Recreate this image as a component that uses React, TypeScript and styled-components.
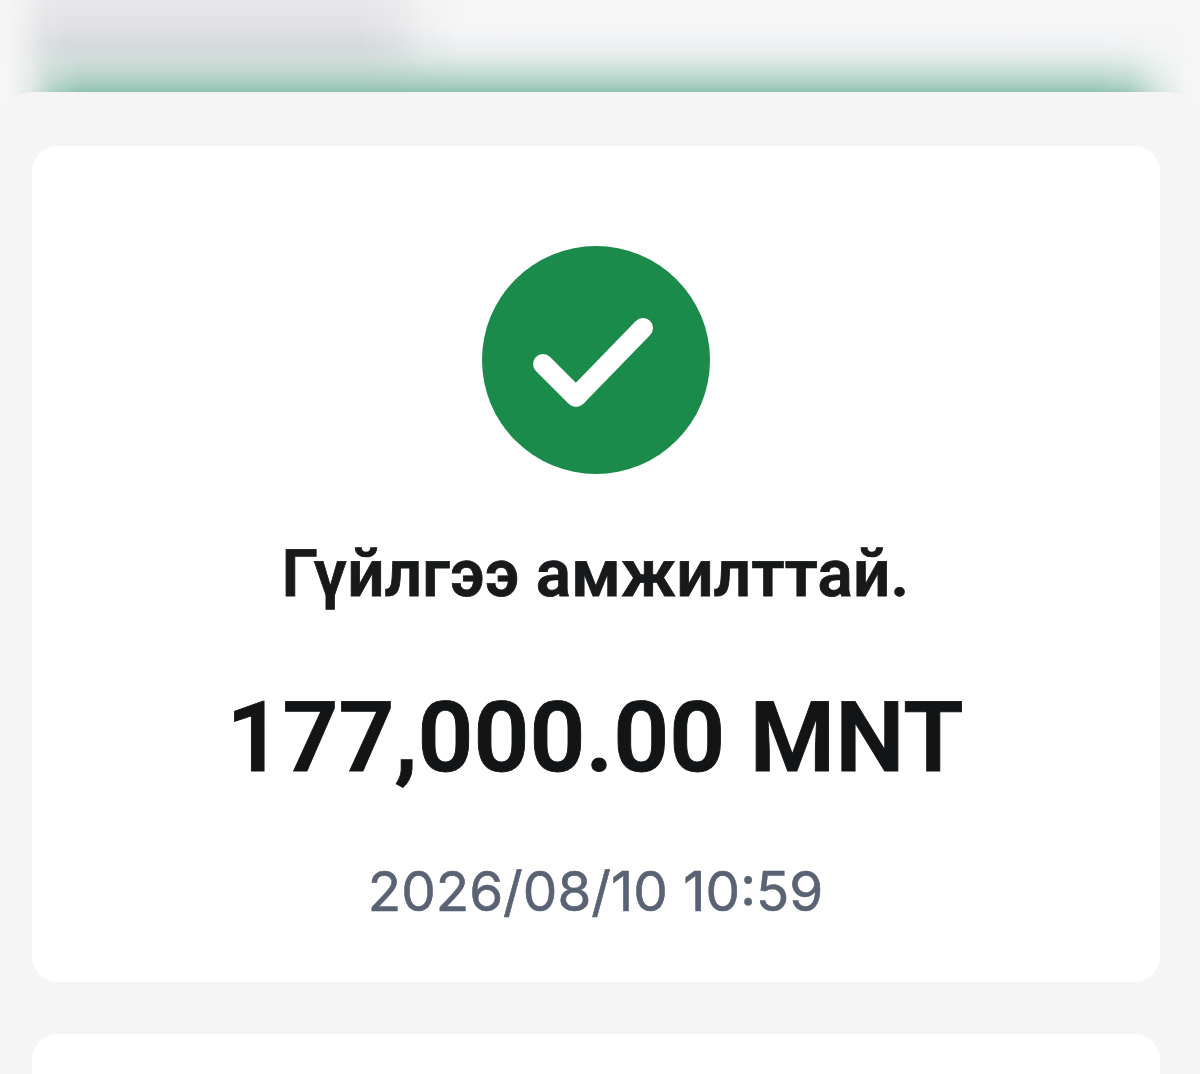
import React from "react";
import styled, { createGlobalStyle } from "styled-components";

const GlobalStyle = createGlobalStyle`
  * { box-sizing: border-box; }
  body { margin: 0; background: #f5f6f6; }
`;

const Screen = styled.main`
  position: relative;
  display: flex;
  flex-direction: column;
  height: 1074px;
  padding-top: 92px;
  overflow: hidden;
  background: #f6f6f7;
  font-family: Roboto, "Noto Sans", sans-serif;
`;

const Backdrop = styled.div`
  position: absolute;
  inset: 0 0 auto;
  height: 120px;
  overflow: hidden;
`;

const Haze = styled.div<{ $fill: string; $fade: string }>`
  position: absolute;
  inset: 0;
  background: linear-gradient(to bottom, ${(p) => p.$fill});
  mask-image: linear-gradient(to right, ${(p) => p.$fade});
`;

const Sheet = styled.section`
  position: relative;
  flex: 1;
  display: flex;
  flex-direction: column;
  gap: 52px;
  padding: 54px 40px 0 32px;
  border-radius: 34px 34px 0 0;
  background: #f5f5f5;
`;

const Card = styled.article<{ $height: number }>`
  display: flex;
  flex: none;
  flex-direction: column;
  align-items: center;
  height: ${(p) => p.$height}px;
  padding-top: 99px;
  border-radius: 26px;
  background: #fff;
`;

const StatusIcon = styled.svg`
  display: block;
  width: 230px;
  height: 230px;
`;

const Title = styled.h1`
  margin: 61px 1px 0 0;
  color: #17191b;
  font-size: 65.6px;
  font-weight: 600;
  line-height: 78px;
  letter-spacing: 0.25px;
  -webkit-text-stroke: 0.8px #17191b;
  text-rendering: geometricPrecision;
  white-space: nowrap;
`;

const Amount = styled.p`
  margin: 66px 2px 0 0;
  color: #121415;
  font-size: 98px;
  font-weight: 600;
  line-height: 116px;
  -webkit-text-stroke: 0.9px #121415;
  text-rendering: geometricPrecision;
  white-space: nowrap;
`;

const Timestamp = styled.time`
  margin: 62px 1px 0 0;
  color: #596374;
  font-family: Inter, sans-serif;
  font-size: 54.8px;
  font-weight: 400;
  line-height: 67px;
  -webkit-text-stroke: 0.6px #596374;
  white-space: nowrap;
`;

const greyFill = "#e8e8eb 0px, #e2e2e5 22px, #dcdee0 46px, rgba(221, 224, 225, 0.6) 64px, rgba(221, 224, 225, 0.1) 90px";
const greyFade = "transparent 6px, rgb(0 0 0 / 0.3) 24px, rgb(0 0 0 / 0.85) 44px, #000 64px, #000 360px, rgb(0 0 0 / 0.75) 395px, rgb(0 0 0 / 0.25) 425px, transparent 460px";
const greenFill =
  "rgb(64 152 122 / 0) 26px, rgb(64 120 122 / 0.03) 40px, rgb(64 140 122 / 0.06) 50px, rgb(64 152 122 / 0.14) 61px, rgb(64 152 122 / 0.27) 73px, rgb(64 152 122 / 0.4) 83px, rgb(64 152 122 / 0.54) 91px";
const greenFade =
  "transparent 10px, rgb(0 0 0 / 0.2) 30px, rgb(0 0 0 / 0.7) 52px, #000 82px, #000 1095px, rgb(0 0 0 / 0.85) 1128px, rgb(0 0 0 / 0.3) 1160px, transparent 1186px";

export default function App() {
  return (
    <>
      <GlobalStyle />
      <Screen>
        <Backdrop aria-hidden="true">
          <Haze $fill={greyFill} $fade={greyFade} />
          <Haze $fill={greenFill} $fade={greenFade} />
        </Backdrop>
        <Sheet>
          <Card $height={836}>
            <StatusIcon viewBox="0 0 230 230" role="img">
              <circle cx="115" cy="115" r="114" fill="#1b8b4b" />
              <path
                d="M62 119L95 152L162 83"
                fill="none"
                stroke="#fff"
                strokeWidth="20"
                strokeLinecap="round"
                strokeLinejoin="round"
              />
            </StatusIcon>
            <Title>Гүйлгээ амжилттай.</Title>
            <Amount>177,000.00 MNT</Amount>
            <Timestamp>2026/08/10 10:59</Timestamp>
          </Card>
          <Card $height={120} />
        </Sheet>
      </Screen>
    </>
  );
}
